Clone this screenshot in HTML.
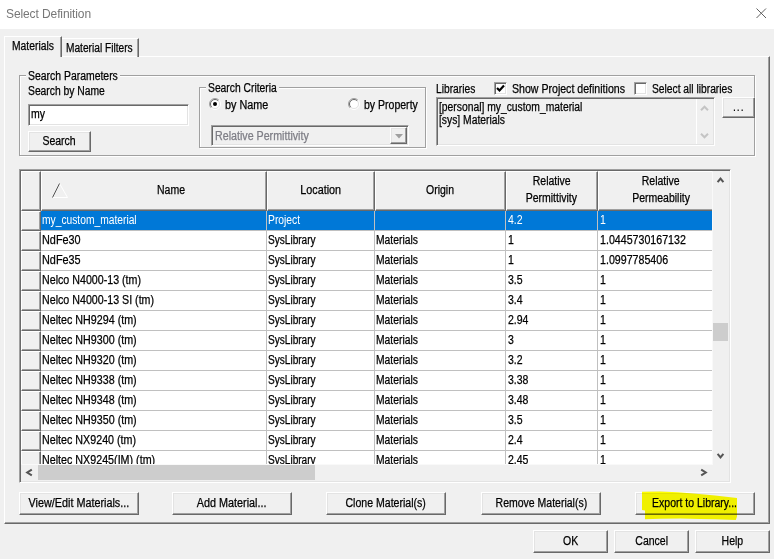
<!DOCTYPE html>
<html><head><meta charset="utf-8">
<style>
html,body{margin:0;padding:0;}
body{width:774px;height:559px;position:relative;overflow:hidden;background:#f0f0f0;font-family:"Liberation Sans",sans-serif;font-size:12px;line-height:14px;color:#000;}
.a{position:absolute;}
.t{position:absolute;white-space:nowrap;transform:scaleX(0.86);transform-origin:0 0;-webkit-text-stroke:0.25px currentColor;}
.c{display:inline-block;white-space:nowrap;transform:scaleX(0.86);-webkit-text-stroke:0.25px currentColor;}
.btn{position:absolute;box-sizing:border-box;background:#f0f0f0;border-top:1px solid #fff;border-left:1px solid #fff;border-right:1px solid #696969;border-bottom:1px solid #696969;box-shadow:inset -1px -1px 0 #a0a0a0, inset 1px 1px 0 #e3e3e3;text-align:center;}
.gb{position:absolute;box-sizing:border-box;border:1px solid #a0a0a0;box-shadow:inset 1px 1px 0 #fff, 1px 1px 0 #fff;}
.sunk{position:absolute;box-sizing:border-box;border-top:1px solid #a0a0a0;border-left:1px solid #a0a0a0;border-right:1px solid #fff;border-bottom:1px solid #fff;box-shadow:inset 1px 1px 0 #696969, inset -1px -1px 0 #e3e3e3;}
.hc{position:absolute;box-sizing:border-box;background:#f0f0f0;border-top:1px solid #fff;border-left:1px solid #fff;border-right:1px solid #696969;border-bottom:1px solid #696969;box-shadow:inset -1px -1px 0 #a0a0a0;}
</style></head><body>
<div class="a" style="left:0px;top:0px;width:774px;height:29px;background:#fff;"></div>
<div class="a" style="left:6px;top:7px;font-size:12px;line-height:14px;color:#777;white-space:nowrap;letter-spacing:-0.1px">Select Definition</div>
<svg class="a" style="left:756px;top:8px" width="11" height="11" viewBox="0 0 11 11"><path d="M0.5 0.5 L10 10 M10 0.5 L0.5 10" stroke="#606060" stroke-width="1" fill="none"/></svg>
<div class="a" style="left:4px;top:56px;width:766px;height:468px;box-sizing:border-box;border-top:1px solid #fff;border-left:1px solid #fff;border-right:1px solid #696969;border-bottom:1px solid #696969;box-shadow:inset -1px -1px 0 #a0a0a0;"></div>
<div class="a" style="left:61px;top:38px;width:78px;height:19px;box-sizing:border-box;border-top:1px solid #fff;border-right:1px solid #696969;box-shadow:inset -1px 0 0 #a0a0a0;"></div>
<div class="t" style="left:66px;top:41px;transform:scaleX(0.847);">Material Filters</div>
<div class="a" style="left:4px;top:36px;width:58px;height:21px;box-sizing:border-box;background:#f0f0f0;border-top:1px solid #fff;border-left:1px solid #fff;border-right:1px solid #696969;box-shadow:inset -1px 0 0 #a0a0a0;"></div>
<div class="t" style="left:12px;top:39px;transform:scaleX(0.86);">Materials</div>
<div class="gb" style="left:19px;top:75px;width:736px;height:81px;"></div>
<div class="a" style="left:26px;top:70px;width:94px;height:10px;background:#f0f0f0;"></div>
<div class="t" style="left:28px;top:69px;transform:scaleX(0.869);">Search Parameters</div>
<div class="t" style="left:28px;top:84px;transform:scaleX(0.86);">Search by Name</div>
<div class="sunk" style="left:28px;top:104px;width:161px;height:22px;background:#fff;"></div>
<div class="t" style="left:31px;top:107px;transform:scaleX(0.875);">my</div>
<div class="btn" style="left:28px;top:131px;width:63px;height:21px;"></div>
<div class="a" style="left:28px;top:134px;width:63px;text-align:center;"><span class="c" style="transform:scaleX(0.875)">Search</span></div>
<div class="gb" style="left:199px;top:87px;width:227px;height:61px;"></div>
<div class="a" style="left:206px;top:82px;width:73px;height:10px;background:#f0f0f0;"></div>
<div class="t" style="left:208px;top:81px;transform:scaleX(0.86);">Search Criteria</div>
<svg class="a" style="left:209px;top:98px" width="12" height="12" viewBox="0 0 12 12"><circle cx="6" cy="6" r="4.5" fill="#fff"/><path d="M2.1 9.9 A5.5 5.5 0 0 1 9.9 2.1" stroke="#a0a0a0" stroke-width="1" fill="none"/><path d="M2.1 9.9 A5.5 5.5 0 0 0 9.9 2.1" stroke="#fff" stroke-width="1" fill="none"/><path d="M2.8 9.2 A4.5 4.5 0 0 1 9.2 2.8" stroke="#696969" stroke-width="1" fill="none"/><path d="M2.8 9.2 A4.5 4.5 0 0 0 9.2 2.8" stroke="#e3e3e3" stroke-width="1" fill="none"/><circle cx="6" cy="6" r="2" fill="#000"/></svg>
<div class="t" style="left:225px;top:98px;transform:scaleX(0.9);">by Name</div>
<svg class="a" style="left:348px;top:98px" width="12" height="12" viewBox="0 0 12 12"><circle cx="6" cy="6" r="4.5" fill="#fff"/><path d="M2.1 9.9 A5.5 5.5 0 0 1 9.9 2.1" stroke="#a0a0a0" stroke-width="1" fill="none"/><path d="M2.1 9.9 A5.5 5.5 0 0 0 9.9 2.1" stroke="#fff" stroke-width="1" fill="none"/><path d="M2.8 9.2 A4.5 4.5 0 0 1 9.2 2.8" stroke="#696969" stroke-width="1" fill="none"/><path d="M2.8 9.2 A4.5 4.5 0 0 0 9.2 2.8" stroke="#e3e3e3" stroke-width="1" fill="none"/></svg>
<div class="t" style="left:364px;top:98px;transform:scaleX(0.877);">by Property</div>
<div class="sunk" style="left:211px;top:125px;width:198px;height:21px;background:#f0f0f0;"></div>
<div class="t" style="left:215px;top:129px;transform:scaleX(0.875);color:#7d7d85;transform:scaleX(0.89);">Relative Permittivity</div>
<div class="btn" style="left:390px;top:127px;width:17px;height:17px;"></div>
<svg class="a" style="left:395px;top:134px" width="8" height="5" viewBox="0 0 8 5"><path d="M0 0 L8 0 L4 4.5 Z" fill="#a0a0a0"/></svg>
<div class="t" style="left:436px;top:82px;transform:scaleX(0.853);">Libraries</div>
<div class="sunk" style="left:494px;top:82px;width:13px;height:13px;background:#fff;"></div>
<svg class="a" style="left:496px;top:84px" width="9" height="9" viewBox="0 0 9 9"><path d="M1 4 L3.5 6.5 L8 1.5" stroke="#000" stroke-width="2.2" fill="none"/></svg>
<div class="t" style="left:512px;top:82px;transform:scaleX(0.882);">Show Project definitions</div>
<div class="sunk" style="left:634px;top:82px;width:13px;height:13px;background:#fff;"></div>
<div class="t" style="left:652px;top:82px;transform:scaleX(0.855);">Select all libraries</div>
<div class="sunk" style="left:436px;top:97px;width:279px;height:49px;background:#f0f0f0;"></div>
<div class="t" style="left:439px;top:100px;transform:scaleX(0.86);">[personal] my_custom_material</div>
<div class="t" style="left:439px;top:113px;transform:scaleX(0.86);">[sys] Materials</div>
<div class="a" style="left:696px;top:99px;width:1px;height:45px;background:#fff;"></div>
<svg class="a" style="left:700px;top:104px" width="9" height="8" viewBox="0 0 9 8"><path d="M1 6.2 L4.5 2.7 L8 6.2" stroke="#c4c4c4" stroke-width="2" fill="none"/></svg>
<svg class="a" style="left:700px;top:132px" width="9" height="8" viewBox="0 0 9 8"><path d="M1 1.8 L4.5 5.3 L8 1.8" stroke="#c4c4c4" stroke-width="2" fill="none"/></svg>
<div class="btn" style="left:722px;top:97px;width:33px;height:21px;"></div>
<div class="a" style="left:722px;top:100px;width:33px;text-align:center;letter-spacing:0.5px">...</div>
<div class="sunk" style="left:19px;top:169px;width:712px;height:314px;background:#f0f0f0;"></div>
<div class="a" style="left:21px;top:171px;width:691px;height:293px;overflow:hidden;background:#fff;">
<div class="a" style="left:0px;top:0px;width:692px;height:40px;background:#f0f0f0;"></div>
<div class="hc" style="left:0px;top:0px;width:20px;height:40px;"></div>
<div class="hc" style="left:20px;top:0px;width:226px;height:40px;"></div>
<div class="hc" style="left:246px;top:0px;width:108px;height:40px;"></div>
<div class="hc" style="left:354px;top:0px;width:131px;height:40px;"></div>
<div class="hc" style="left:485px;top:0px;width:92px;height:40px;"></div>
<div class="hc" style="left:577px;top:0px;width:202px;height:40px;"></div>
<div class="hc" style="left:0px;top:40px;width:20px;height:20px;"></div>
<div class="hc" style="left:0px;top:60px;width:20px;height:20px;"></div>
<div class="hc" style="left:0px;top:80px;width:20px;height:20px;"></div>
<div class="hc" style="left:0px;top:100px;width:20px;height:20px;"></div>
<div class="hc" style="left:0px;top:120px;width:20px;height:20px;"></div>
<div class="hc" style="left:0px;top:140px;width:20px;height:20px;"></div>
<div class="hc" style="left:0px;top:160px;width:20px;height:20px;"></div>
<div class="hc" style="left:0px;top:180px;width:20px;height:20px;"></div>
<div class="hc" style="left:0px;top:200px;width:20px;height:20px;"></div>
<div class="hc" style="left:0px;top:220px;width:20px;height:20px;"></div>
<div class="hc" style="left:0px;top:240px;width:20px;height:20px;"></div>
<div class="hc" style="left:0px;top:260px;width:20px;height:20px;"></div>
<div class="hc" style="left:0px;top:280px;width:20px;height:20px;"></div>
<div class="a" style="left:20px;top:40px;width:672px;height:19px;background:#0078d7;"></div>
<div class="a" style="left:20px;top:59px;width:672px;height:1px;background:#c0c0c0;"></div>
<div class="a" style="left:20px;top:79px;width:672px;height:1px;background:#c0c0c0;"></div>
<div class="a" style="left:20px;top:99px;width:672px;height:1px;background:#c0c0c0;"></div>
<div class="a" style="left:20px;top:119px;width:672px;height:1px;background:#c0c0c0;"></div>
<div class="a" style="left:20px;top:139px;width:672px;height:1px;background:#c0c0c0;"></div>
<div class="a" style="left:20px;top:159px;width:672px;height:1px;background:#c0c0c0;"></div>
<div class="a" style="left:20px;top:179px;width:672px;height:1px;background:#c0c0c0;"></div>
<div class="a" style="left:20px;top:199px;width:672px;height:1px;background:#c0c0c0;"></div>
<div class="a" style="left:20px;top:219px;width:672px;height:1px;background:#c0c0c0;"></div>
<div class="a" style="left:20px;top:239px;width:672px;height:1px;background:#c0c0c0;"></div>
<div class="a" style="left:20px;top:259px;width:672px;height:1px;background:#c0c0c0;"></div>
<div class="a" style="left:20px;top:279px;width:672px;height:1px;background:#c0c0c0;"></div>
<div class="a" style="left:20px;top:299px;width:672px;height:1px;background:#c0c0c0;"></div>
<div class="a" style="left:245px;top:40px;width:1px;height:260px;background:#c0c0c0;"></div>
<div class="a" style="left:353px;top:40px;width:1px;height:260px;background:#c0c0c0;"></div>
<div class="a" style="left:484px;top:40px;width:1px;height:260px;background:#c0c0c0;"></div>
<div class="a" style="left:576px;top:40px;width:1px;height:260px;background:#c0c0c0;"></div>
<div class="t" style="left:21px;top:42px;transform:scaleX(0.855);color:#fff;-webkit-text-stroke:0;">my_custom_material</div>
<div class="t" style="left:247px;top:42px;transform:scaleX(0.86);color:#fff;-webkit-text-stroke:0;">Project</div>
<div class="t" style="left:487px;top:42px;transform:scaleX(0.875);color:#fff;-webkit-text-stroke:0;">4.2</div>
<div class="t" style="left:579px;top:42px;transform:scaleX(0.875);color:#fff;-webkit-text-stroke:0;">1</div>
<div class="t" style="left:21px;top:62px;transform:scaleX(0.905);">NdFe30</div>
<div class="t" style="left:247px;top:62px;transform:scaleX(0.84);">SysLibrary</div>
<div class="t" style="left:355px;top:62px;transform:scaleX(0.86);">Materials</div>
<div class="t" style="left:487px;top:62px;transform:scaleX(0.875);">1</div>
<div class="t" style="left:579px;top:62px;transform:scaleX(0.887);">1.0445730167132</div>
<div class="t" style="left:21px;top:82px;transform:scaleX(0.905);">NdFe35</div>
<div class="t" style="left:247px;top:82px;transform:scaleX(0.84);">SysLibrary</div>
<div class="t" style="left:355px;top:82px;transform:scaleX(0.86);">Materials</div>
<div class="t" style="left:487px;top:82px;transform:scaleX(0.875);">1</div>
<div class="t" style="left:579px;top:82px;transform:scaleX(0.887);">1.0997785406</div>
<div class="t" style="left:21px;top:102px;transform:scaleX(0.889);">Nelco N4000-13 (tm)</div>
<div class="t" style="left:247px;top:102px;transform:scaleX(0.84);">SysLibrary</div>
<div class="t" style="left:355px;top:102px;transform:scaleX(0.86);">Materials</div>
<div class="t" style="left:487px;top:102px;transform:scaleX(0.875);">3.5</div>
<div class="t" style="left:579px;top:102px;transform:scaleX(0.875);">1</div>
<div class="t" style="left:21px;top:122px;transform:scaleX(0.889);">Nelco N4000-13 SI (tm)</div>
<div class="t" style="left:247px;top:122px;transform:scaleX(0.84);">SysLibrary</div>
<div class="t" style="left:355px;top:122px;transform:scaleX(0.86);">Materials</div>
<div class="t" style="left:487px;top:122px;transform:scaleX(0.875);">3.4</div>
<div class="t" style="left:579px;top:122px;transform:scaleX(0.875);">1</div>
<div class="t" style="left:21px;top:142px;transform:scaleX(0.893);">Neltec NH9294 (tm)</div>
<div class="t" style="left:247px;top:142px;transform:scaleX(0.84);">SysLibrary</div>
<div class="t" style="left:355px;top:142px;transform:scaleX(0.86);">Materials</div>
<div class="t" style="left:487px;top:142px;transform:scaleX(0.875);">2.94</div>
<div class="t" style="left:579px;top:142px;transform:scaleX(0.875);">1</div>
<div class="t" style="left:21px;top:162px;transform:scaleX(0.893);">Neltec NH9300 (tm)</div>
<div class="t" style="left:247px;top:162px;transform:scaleX(0.84);">SysLibrary</div>
<div class="t" style="left:355px;top:162px;transform:scaleX(0.86);">Materials</div>
<div class="t" style="left:487px;top:162px;transform:scaleX(0.875);">3</div>
<div class="t" style="left:579px;top:162px;transform:scaleX(0.875);">1</div>
<div class="t" style="left:21px;top:182px;transform:scaleX(0.893);">Neltec NH9320 (tm)</div>
<div class="t" style="left:247px;top:182px;transform:scaleX(0.84);">SysLibrary</div>
<div class="t" style="left:355px;top:182px;transform:scaleX(0.86);">Materials</div>
<div class="t" style="left:487px;top:182px;transform:scaleX(0.875);">3.2</div>
<div class="t" style="left:579px;top:182px;transform:scaleX(0.875);">1</div>
<div class="t" style="left:21px;top:202px;transform:scaleX(0.893);">Neltec NH9338 (tm)</div>
<div class="t" style="left:247px;top:202px;transform:scaleX(0.84);">SysLibrary</div>
<div class="t" style="left:355px;top:202px;transform:scaleX(0.86);">Materials</div>
<div class="t" style="left:487px;top:202px;transform:scaleX(0.875);">3.38</div>
<div class="t" style="left:579px;top:202px;transform:scaleX(0.875);">1</div>
<div class="t" style="left:21px;top:222px;transform:scaleX(0.893);">Neltec NH9348 (tm)</div>
<div class="t" style="left:247px;top:222px;transform:scaleX(0.84);">SysLibrary</div>
<div class="t" style="left:355px;top:222px;transform:scaleX(0.86);">Materials</div>
<div class="t" style="left:487px;top:222px;transform:scaleX(0.875);">3.48</div>
<div class="t" style="left:579px;top:222px;transform:scaleX(0.875);">1</div>
<div class="t" style="left:21px;top:242px;transform:scaleX(0.893);">Neltec NH9350 (tm)</div>
<div class="t" style="left:247px;top:242px;transform:scaleX(0.84);">SysLibrary</div>
<div class="t" style="left:355px;top:242px;transform:scaleX(0.86);">Materials</div>
<div class="t" style="left:487px;top:242px;transform:scaleX(0.875);">3.5</div>
<div class="t" style="left:579px;top:242px;transform:scaleX(0.875);">1</div>
<div class="t" style="left:21px;top:262px;transform:scaleX(0.893);">Neltec NX9240 (tm)</div>
<div class="t" style="left:247px;top:262px;transform:scaleX(0.84);">SysLibrary</div>
<div class="t" style="left:355px;top:262px;transform:scaleX(0.86);">Materials</div>
<div class="t" style="left:487px;top:262px;transform:scaleX(0.875);">2.4</div>
<div class="t" style="left:579px;top:262px;transform:scaleX(0.875);">1</div>
<div class="t" style="left:21px;top:282px;transform:scaleX(0.893);">Neltec NX9245(IM) (tm)</div>
<div class="t" style="left:247px;top:282px;transform:scaleX(0.84);">SysLibrary</div>
<div class="t" style="left:355px;top:282px;transform:scaleX(0.86);">Materials</div>
<div class="t" style="left:487px;top:282px;transform:scaleX(0.875);">2.45</div>
<div class="t" style="left:579px;top:282px;transform:scaleX(0.875);">1</div>
<div class="a" style="left:56px;top:12px;width:189px;text-align:center;"><span class="c" style="transform:scaleX(0.875)">Name</span></div>
<div class="a" style="left:246px;top:12px;width:107px;text-align:center;"><span class="c" style="transform:scaleX(0.9)">Location</span></div>
<div class="a" style="left:354px;top:12px;width:130px;text-align:center;"><span class="c" style="transform:scaleX(0.875)">Origin</span></div>
<div class="a" style="left:485px;top:3px;width:91px;text-align:center;"><span class="c" style="transform:scaleX(0.875)">Relative</span></div>
<div class="a" style="left:485px;top:20px;width:91px;text-align:center;"><span class="c" style="transform:scaleX(0.875)">Permittivity</span></div>
<div class="a" style="left:577px;top:3px;width:126px;text-align:center;"><span class="c" style="transform:scaleX(0.875)">Relative</span></div>
<div class="a" style="left:577px;top:20px;width:126px;text-align:center;"><span class="c" style="transform:scaleX(0.875)">Permeability</span></div>
<svg class="a" style="left:30px;top:12px" width="18" height="16" viewBox="0 0 18 16"><path d="M8.5 0.5 L16.5 14.5 L1.5 14.5" stroke="#fff" stroke-width="1" fill="none"/><path d="M1.5 14.5 L8.5 0.5" stroke="#555" stroke-width="1" fill="none"/></svg>
</div>
<div class="a" style="left:712px;top:171px;width:1px;height:294px;background:#f9f9f9;"></div>
<div class="a" style="left:21px;top:464px;width:692px;height:1px;background:#f9f9f9;"></div>
<div class="a" style="left:713px;top:323px;width:15px;height:18px;background:#cdcdcd;"></div>
<div class="a" style="left:38px;top:465px;width:277px;height:15px;background:#cdcdcd;"></div>
<svg class="a" style="left:0;top:0" width="774" height="559" viewBox="0 0 774 559"><g stroke="#555" stroke-width="2" fill="none" stroke-linejoin="miter"><path d="M717.6 182.2 L720.5 178.6 L723.4 182.2"/><path d="M717.6 453.8 L720.5 457.4 L723.4 453.8"/><path d="M31.8 469.6 L27.2 472.5 L31.8 475.4"/><path d="M701.2 469.6 L705.8 472.5 L701.2 475.4"/></g></svg>
<div class="btn" style="left:19px;top:492px;width:120px;height:23px;"></div>
<div class="a" style="left:19px;top:496px;width:120px;text-align:center;"><span class="c" style="transform:scaleX(0.9)">View/Edit Materials...</span></div>
<div class="btn" style="left:172px;top:492px;width:120px;height:23px;"></div>
<div class="a" style="left:172px;top:496px;width:120px;text-align:center;"><span class="c" style="transform:scaleX(0.9)">Add Material...</span></div>
<div class="btn" style="left:326px;top:492px;width:120px;height:23px;"></div>
<div class="a" style="left:326px;top:496px;width:120px;text-align:center;"><span class="c" style="transform:scaleX(0.88)">Clone Material(s)</span></div>
<div class="btn" style="left:481px;top:492px;width:120px;height:23px;"></div>
<div class="a" style="left:481px;top:496px;width:120px;text-align:center;"><span class="c" style="transform:scaleX(0.875)">Remove Material(s)</span></div>
<div class="btn" style="left:635px;top:492px;width:120px;height:23px;"></div>
<div class="a" style="left:635px;top:496px;width:120px;text-align:center;"><span class="c" style="transform:scaleX(0.874)">Export to Library...</span></div>
<svg class="a" style="left:640px;top:490px;mix-blend-mode:multiply" width="100" height="33" viewBox="640 490 100 33"><path d="M642 491.8 L660 491.6 L678 492.2 L699 494 L715 495.5 L737 498 L737 516.5 L735.8 520 L715 519.3 L700 519 L680 518.5 L660 518.8 L645 519.3 L645 510.5 L642 510 Z" fill="#ffff00"/></svg>
<div class="btn" style="left:533px;top:530px;width:75px;height:23px;"></div>
<div class="a" style="left:533px;top:534px;width:75px;text-align:center;"><span class="c" style="transform:scaleX(0.875)">OK</span></div>
<div class="btn" style="left:614px;top:530px;width:75px;height:23px;"></div>
<div class="a" style="left:614px;top:534px;width:75px;text-align:center;"><span class="c" style="transform:scaleX(0.875)">Cancel</span></div>
<div class="btn" style="left:695px;top:530px;width:75px;height:23px;"></div>
<div class="a" style="left:695px;top:534px;width:75px;text-align:center;"><span class="c" style="transform:scaleX(0.875)">Help</span></div>
</body></html>
